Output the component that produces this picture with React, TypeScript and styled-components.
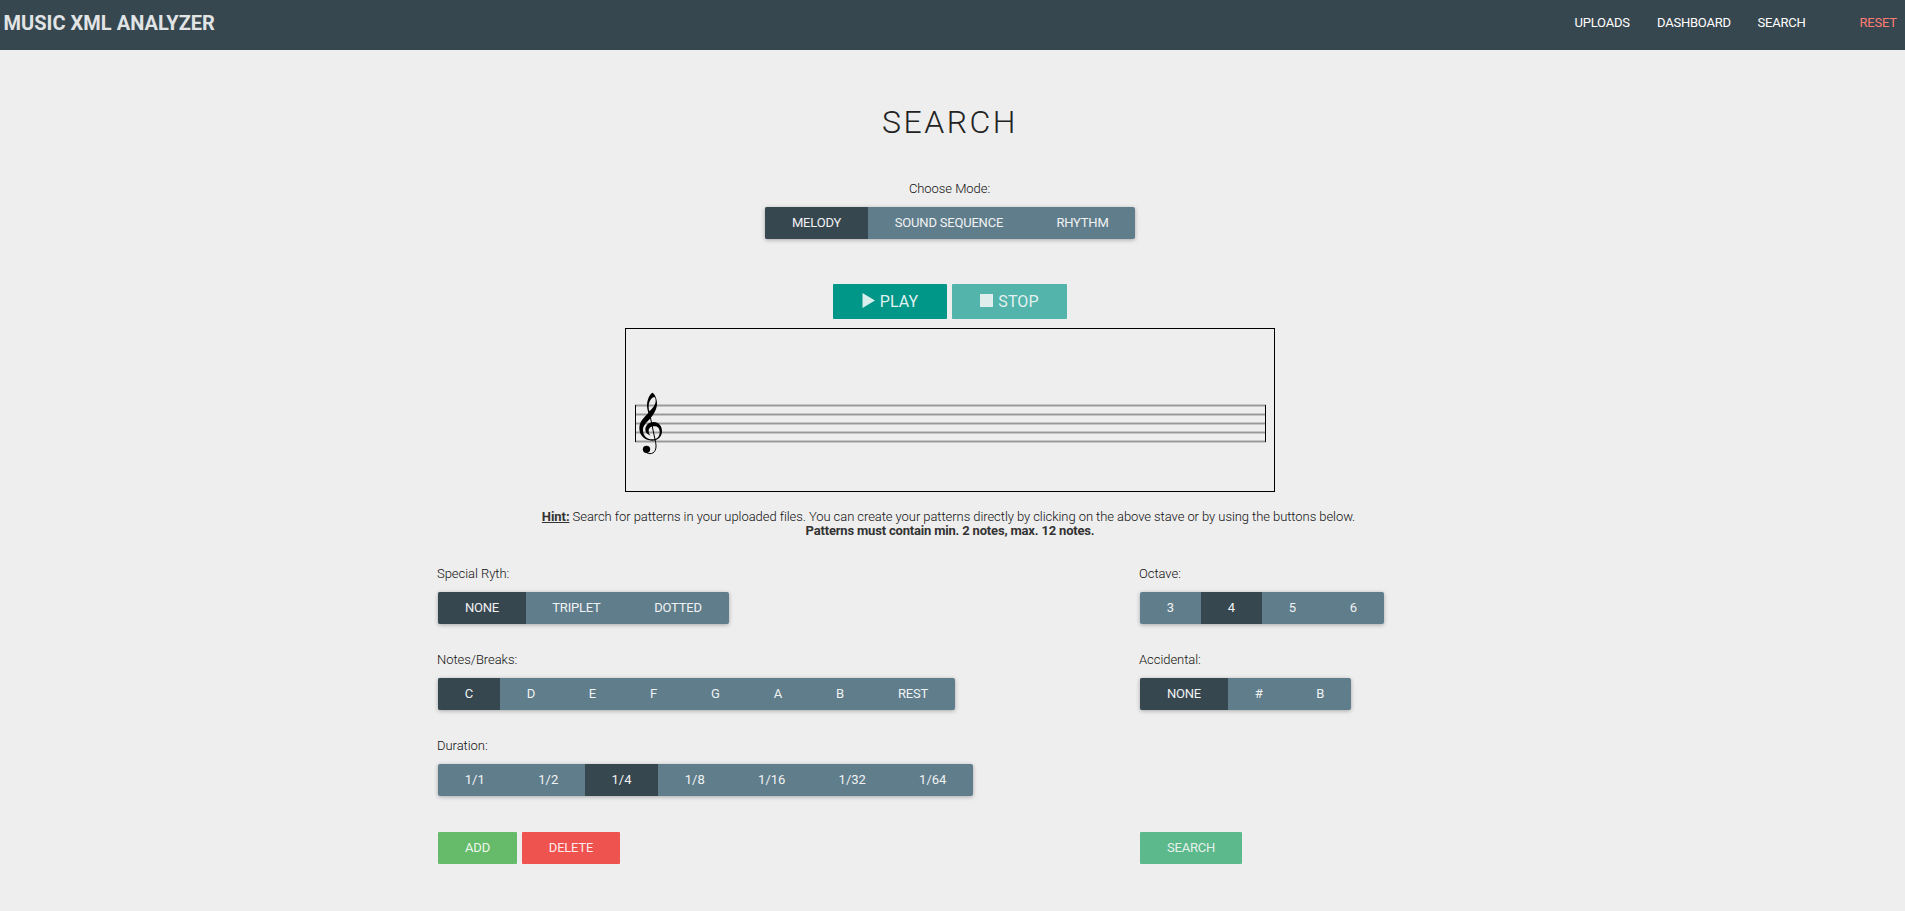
import React from 'react';
import styled, { createGlobalStyle } from 'styled-components';

const GlobalStyle = createGlobalStyle`
  * { box-sizing: border-box; }
  body {
    margin: 0;
    background: #eee;
    color: #333;
    font-family: Roboto, "Liberation Sans", sans-serif;
    font-size: 13px;
    font-weight: 400;
    line-height: 14px;
  }
`;

const Page = styled.div`
  min-height: 911px;
`;

const Navbar = styled.header`
  display: flex;
  justify-content: space-between;
  height: 50px;
  padding: 13px 8px 0 3.5px;
  background: #37474f;
`;

const Brand = styled.div`
  font-size: 20px;
  font-weight: 700;
  line-height: 20px;
  letter-spacing: 0.03px;
  color: #e1e4e5;
`;

const Nav = styled.nav`
  display: flex;
  line-height: 20px;
  letter-spacing: -0.22px;
`;

const NavLink = styled.a<{ $w: number; $danger?: boolean }>`
  width: ${(p) => p.$w}px;
  color: ${(p) => (p.$danger ? '#ff7c74' : '#fff')};
  white-space: nowrap;
`;

const Main = styled.main`
  width: 1900px;
  display: flex;
  flex-direction: column;
  align-items: center;
`;

const Title = styled.h1`
  margin: 51px 0 0;
  font-size: 32px;
  font-weight: 300;
  line-height: 42px;
  letter-spacing: 2.5px;
  color: #222;
`;

const Label = styled.div`
  height: 14px;
  margin: 0 0 11px -1px;
  white-space: nowrap;
  font-weight: 300;
  letter-spacing: -0.05px;
  color: #111;
`;

const Mode = styled.section`
  display: flex;
  flex-direction: column;
  align-items: center;
  margin-top: 39px;
`;

const Group = styled.div`
  display: inline-flex;
  height: 32px;
  border-radius: 2px;
  overflow: hidden;
  background: #607d8b;
  box-shadow: 0 1px 4px rgba(0, 0, 0, 0.3);
`;

const Segment = styled.button<{ $w: number; $active?: boolean }>`
  width: ${(p) => p.$w}px;
  padding: 0;
  border: 0;
  font: inherit;
  line-height: 32px;
  letter-spacing: ${(p) => (p.$w > 82 ? -0.2 : 0)}px;
  white-space: nowrap;
  color: #f0f3f4;
  background: ${(p) => (p.$active ? '#37474f' : 'transparent')};
`;

const Buttons = styled.div`
  display: flex;
  gap: 5px;
`;

const Playback = styled(Buttons)`
  margin: 45px 0 9px;
`;

const Action = styled.button<{ $w: number; $bg: string; $faded?: boolean; $large?: boolean }>`
  display: flex;
  align-items: center;
  justify-content: center;
  gap: 5px;
  width: ${(p) => p.$w}px;
  height: ${(p) => (p.$large ? 35 : 32)}px;
  padding: 0;
  border: 0;
  border-radius: 1px;
  font: inherit;
  font-size: ${(p) => (p.$large ? 16 : 13)}px;
  letter-spacing: ${(p) => (p.$large ? 0.1 : -0.2)}px;
  color: rgba(255, 255, 255, 0.9);
  background: ${(p) => p.$bg};
  opacity: ${(p) => (p.$faded ? 0.65 : 1)};

  svg { position: relative; top: -1px; opacity: 0.94; }
`;

const Stave = styled.div`
  width: 650px;
  height: 164px;
  border: 1px solid #000;

  svg { display: block; }
`;

const Hint = styled.p`
  margin: 18px 0 0;
  text-align: center;
  font-weight: 300;
  letter-spacing: -0.067px;
  color: #111;

  b { font-weight: 700; color: #333; letter-spacing: -0.18px; }
  u { font-weight: 700; color: #333; }
`;

const HintLine = styled.span`
  display: block;
  margin-right: 3px;
`;

const Controls = styled.section`
  display: grid;
  grid-template-columns: 702px 322px;
  width: 1024px;
  margin-top: 29px;
`;

const Column = styled.div`
  display: flex;
  flex-direction: column;
  gap: 29px;
`;

const Footer = styled(Controls)`
  margin-top: 36px;
`;

type Option = [string, number];

const Segments = ({ options, active }: { options: Option[]; active: number }) => (
  <Group>
    {options.map(([text, width], i) => (
      <Segment key={text} $w={width} $active={i === active}>{text}</Segment>
    ))}
  </Group>
);

const Field = ({ label, options, active }: { label: string; options: Option[]; active: number }) => (
  <div>
    <Label>{label}</Label>
    <Segments options={options} active={active} />
  </div>
);

const TrebleStave = () => (
  <svg width="648" height="162" viewBox="0 0 648 162">
    {[75, 84, 93, 102, 111].map((y) => (
      <g key={y}>
        <rect x="9" y={y} width="631" height="3" fill="#c6c6c6" />
        <rect x="9" y={y + 1} width="631" height="1" fill="#999" />
      </g>
    ))}
    <rect x="9" y="76" width="1" height="37" />
    <rect x="639" y="76" width="1" height="37" />
    <g transform="translate(-11 51) scale(0.33333)">
      <path
        fillRule="evenodd"
        d="M112 38 C118 40 126 55 126 70 C126 88 117 102 107 114 C94 128 84 136 84 150 C84 168 96 178 112 178 C128 178 134 169 134 156 C134 145 128 139 118 139 C107 139 101 145 101 152 C101 159 103 163 107 167 C97 163 91 156 91 149 C91 137 101 126 116 126 C131 126 141 138 141 153 C141 170 129 182 111 182 C91 182 73 168 73 145 C73 125 86 113 100 99 C98 91 96 85 96 76 C96 60 104 42 112 38 Z M117 51 C108 54 101 66 101 80 C101 86 102 90 103 94 C113 85 122 74 122 62 C122 56 120 51 117 51 Z"
      />
      <path d="M102 92 L122 188 C126 207 119 221 105 221 C98 221 91 217 89 211" fill="none" stroke="#000" strokeWidth="3" />
      <circle cx="94.500" cy="208" r="11" />
    </g>
  </svg>
);

export default function App() {
  return (
    <Page>
      <GlobalStyle />
      <Navbar>
        <Brand>MUSIC XML ANALYZER</Brand>
        <Nav>
          <NavLink $w={82.5}>UPLOADS</NavLink>
          <NavLink $w={100.5}>DASHBOARD</NavLink>
          <NavLink $w={102}>SEARCH</NavLink>
          <NavLink $w={37.5} $danger>RESET</NavLink>
        </Nav>
      </Navbar>
      <Main>
        <Title>SEARCH</Title>
        <Mode>
          <Label>Choose Mode:</Label>
          <Segments options={[['MELODY', 103], ['SOUND SEQUENCE', 162], ['RHYTHM', 105]]} active={0} />
        </Mode>
        <Playback>
          <Action $w={114} $bg="#009688" $large>
            <svg width="13" height="15" viewBox="0 0 13 15"><path d="M0.500 0 L13 7.500 L0.500 15 Z" fill="currentColor" /></svg>
            PLAY
          </Action>
          <Action $w={115} $bg="#009688" $large $faded>
            <svg width="13" height="15" viewBox="0 0 13 15"><rect y="1" width="13" height="13" fill="currentColor" /></svg>
            STOP
          </Action>
        </Playback>
        <Stave><TrebleStave /></Stave>
        <Hint>
          <HintLine>
            <u>Hint:</u> Search for patterns in your uploaded files. You can create your patterns directly by clicking on the above stave or by using the buttons below.
          </HintLine>
          <b>Patterns must contain min. 2 notes, max. 12 notes.</b>
        </Hint>
        <Controls>
          <Column>
            <Field label="Special Ryth:" active={0} options={[['NONE', 88], ['TRIPLET', 101], ['DOTTED', 102]]} />
            <Field
              label="Notes/Breaks:"
              active={0}
              options={[['C', 62], ['D', 62], ['E', 61], ['F', 61], ['G', 63], ['A', 62], ['B', 62], ['REST', 84]]}
            />
            <Field
              label="Duration:"
              active={2}
              options={[['1/1', 73.5], ['1/2', 73.5], ['1/4', 73], ['1/8', 73.5], ['1/16', 80.5], ['1/32', 80.5], ['1/64', 80.5]]}
            />
          </Column>
          <Column>
            <Field label="Octave:" active={1} options={[['3', 61], ['4', 61], ['5', 61], ['6', 61]]} />
            <Field label="Accidental:" active={0} options={[['NONE', 88], ['#', 61.5], ['B', 61.5]]} />
          </Column>
        </Controls>
        <Footer>
          <Buttons>
            <Action $w={79} $bg="#66bb6a">ADD</Action>
            <Action $w={98} $bg="#ef5350">DELETE</Action>
          </Buttons>
          <Buttons>
            <Action $w={102} $bg="#0f9d58" $faded>SEARCH</Action>
          </Buttons>
        </Footer>
      </Main>
    </Page>
  );
}
